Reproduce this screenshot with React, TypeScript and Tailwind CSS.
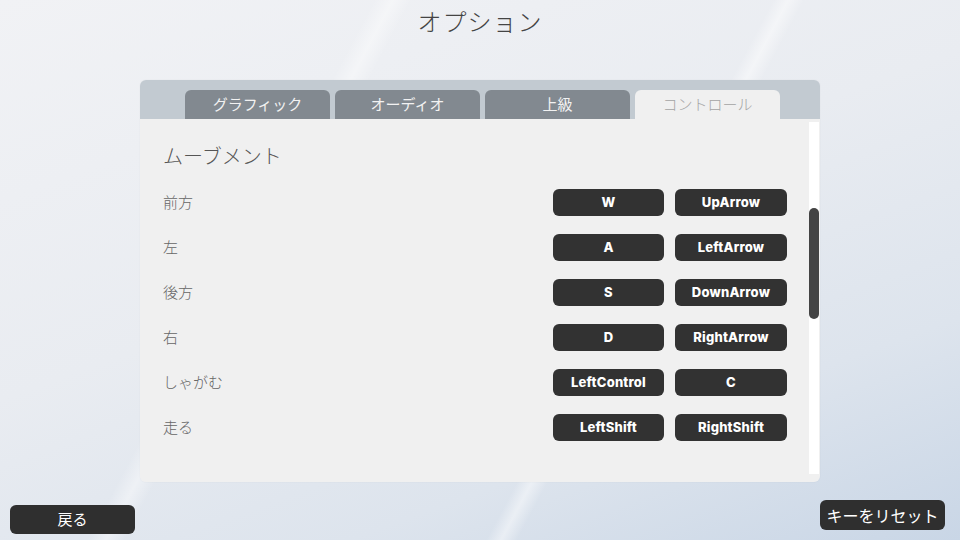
const tabs = ['グラフィック', 'オーディオ', '上級', 'コントロール'];

const bindings: { label: string; keys: [string, string] }[] = [
  { label: '前方', keys: ['W', 'UpArrow'] },
  { label: '左', keys: ['A', 'LeftArrow'] },
  { label: '後方', keys: ['S', 'DownArrow'] },
  { label: '右', keys: ['D', 'RightArrow'] },
  { label: 'しゃがむ', keys: ['LeftControl', 'C'] },
  { label: '走る', keys: ['LeftShift', 'RightShift'] },
];

const jp = "font-['Noto_Sans_CJK_JP','Noto_Sans',sans-serif]";

function KeyButton({ label, wide }: { label: string; wide?: boolean }) {
  return (
    <div
      className={`${wide ? 'w-[112px]' : 'w-[111px]'} h-[27px] rounded-[6px] bg-[#323232] flex items-center justify-center text-[13px] font-extrabold text-white font-['Inter','Liberation_Sans',sans-serif] tracking-[0.2px]`}
    >
      {label}
    </div>
  );
}

export default function App() {
  const active = 3;

  return (
    <div
      className={`w-[960px] h-[540px] overflow-hidden flex flex-col ${jp} bg-[linear-gradient(118deg,transparent_30%,rgba(255,255,255,0.4)_31.5%,transparent_33%,transparent_62%,rgba(255,255,255,0.45)_63.2%,transparent_64.5%),linear-gradient(160deg,#f1f2f5_0%,#e9ecf1_45%,#dde4ed_75%,#c9d6e6_100%)]`}
    >
      {/* title */}
      <div className="h-[80px] flex justify-center pt-[5px]">
        <h1 className="text-[24px] leading-[32px] text-[#444] font-light tracking-[1px]">オプション</h1>
      </div>

      {/* options panel */}
      <div className="mx-[140px] h-[402px] rounded-[6px] overflow-hidden flex flex-col shadow-[0_0_2px_rgba(0,0,0,0.05)]">
        <div className="h-[39px] bg-[#c2cad1] flex items-end gap-[5px] pl-[45px]">
          {tabs.map((t, i) => (
            <div
              key={t}
              className={`w-[145px] h-[29px] rounded-t-[6px] flex items-center justify-center text-[15px] ${
                i === active ? 'bg-[#f0f0f0] text-[#a4a4a4] font-light' : 'bg-[#828990] text-[#f2f2f2]'
              }`}
            >
              {t}
            </div>
          ))}
        </div>

        <div className="flex-1 bg-[#f0f0f0] flex">
          <div className="flex-1 pl-[23px] pr-[22px] pt-[23px]">
            <h2 className="text-[20px] leading-[28px] text-[#555] font-light">ムーブメント</h2>
            <div className="mt-[10px] flex flex-col">
              {bindings.map(b => (
                <div key={b.label} className="h-[45px] flex items-center justify-between">
                  <span className="text-[15px] text-[#666] font-light">{b.label}</span>
                  <div className="flex gap-[11px]">
                    <KeyButton label={b.keys[0]} />
                    <KeyButton label={b.keys[1]} wide />
                  </div>
                </div>
              ))}
            </div>
          </div>

          {/* scrollbar */}
          <div className="w-[10px] mr-[1px] mt-[3px] mb-[8px] bg-white flex flex-col">
            <div className="mt-[86px] h-[111px] rounded-full bg-[#444]" />
          </div>
        </div>
      </div>

      {/* footer buttons */}
      <div className="flex justify-between items-start px-[10px] pr-[15px]">
        <button className="mt-[23px] w-[125px] h-[29px] rounded-[6px] bg-[#2f2f2f] text-white text-[15px] flex items-center justify-center">
          戻る
        </button>
        <button className="mt-[18px] w-[125px] h-[30px] rounded-[6px] bg-[#2f2f2f] text-white text-[16px] flex items-center justify-center">
          キーをリセット
        </button>
      </div>
    </div>
  );
}
